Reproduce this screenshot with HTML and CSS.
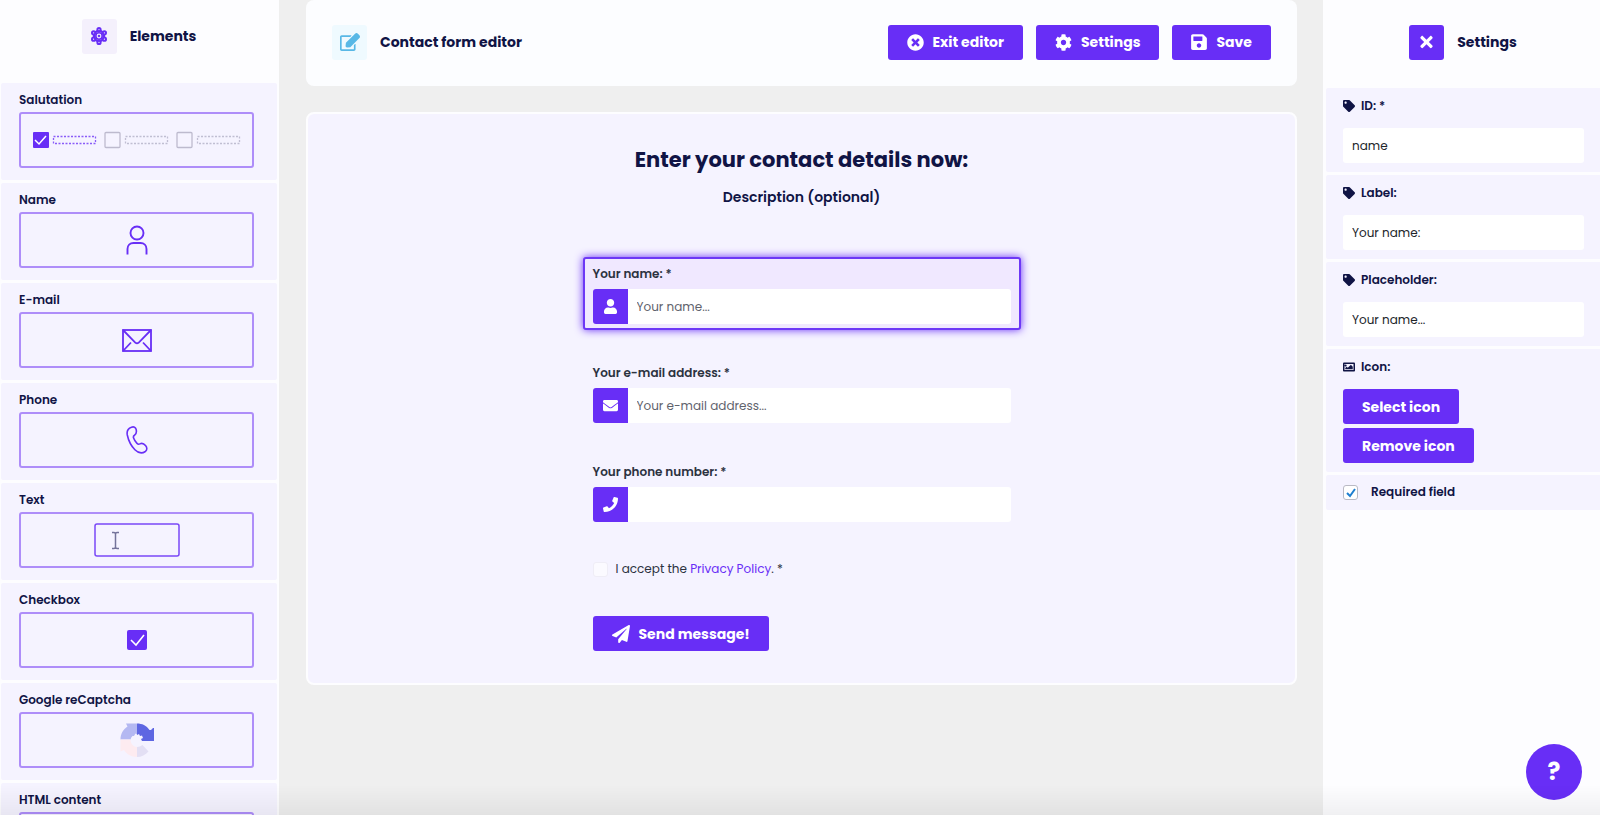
FILE: index.html
```html
<!DOCTYPE html>
<html lang="en">

<head>
    <meta charset="UTF-8">
    <meta name="viewport" content="width=device-width, initial-scale=1.0">
    <title>Contact form editor</title>
    <link rel="stylesheet" href="styles.css">
</head>

<body>
<div class="layout">
    <aside class="sidebar">
        <div class="sidebar-head">
            <span class="head-icon">
                <svg width="18" height="18" viewBox="0 0 18 18" fill="none" stroke="#682ef6" stroke-width="1.6">
                    <path d="M9 3 14 6V12L9 15 4 12V6Z" stroke-width="2.2"/>
                    <circle cx="9" cy="9" r="3.2" fill="#f4f0fc"/>
                    <circle cx="9" cy="9" r="0.5"/>
                    <g fill="#f4f0fc" stroke-width="2">
                        <circle cx="9" cy="2.6" r="1.6"/>
                        <circle cx="14.4" cy="5.8" r="1.6"/>
                        <circle cx="14.4" cy="12.2" r="1.6"/>
                        <circle cx="9" cy="15.4" r="1.6"/>
                        <circle cx="3.6" cy="12.2" r="1.6"/>
                        <circle cx="3.6" cy="5.8" r="1.6"/>
                    </g>
                </svg>
            </span>
            <h2>Elements</h2>
        </div>

        <div class="element">
            <h3>Salutation</h3>
            <div class="element-box">
                <svg width="208" height="18" viewBox="0 0 208 18" fill="none">
                    <rect x="0" y="1" width="16" height="16" rx="1" fill="#682ef6"/>
                    <path d="M2 9l4 4 7-8" stroke="#fff" stroke-width="1.5"/>
                    <rect x="20.5" y="5.5" width="42" height="7" stroke="#8a5cf8" stroke-width="1.3" stroke-dasharray="2 1.5"/>
                    <rect x="72" y="1.5" width="15" height="15" rx="1" stroke="#bdbace" stroke-width="1.3"/>
                    <rect x="92.5" y="5.5" width="42" height="7" stroke="#c0bed2" stroke-width="1.3" stroke-dasharray="2 1.5"/>
                    <rect x="144" y="1.5" width="15" height="15" rx="1" stroke="#bdbace" stroke-width="1.3"/>
                    <rect x="164.5" y="5.5" width="42" height="7" stroke="#c0bed2" stroke-width="1.3" stroke-dasharray="2 1.5"/>
                </svg>
            </div>
        </div>

        <div class="element">
            <h3>Name</h3>
            <div class="element-box">
                <svg width="22" height="30" viewBox="0 0 22 30" fill="none" stroke="#682ef6" stroke-width="1.9">
                    <circle cx="11" cy="8" r="6.5"/>
                    <path d="M1.5 29.5V24c0-3.500 2.500-6 6-6h7c3.500 0 6 2.500 6 6v5.500"/>
                </svg>
            </div>
        </div>

        <div class="element">
            <h3>E-mail</h3>
            <div class="element-box">
                <svg width="30" height="23" viewBox="0 0 30 23" fill="none" stroke="#682ef6" stroke-width="1.8">
                    <rect x="1" y="1" width="28" height="21"/>
                    <path d="M1 1l12.500 12.800q1.500 1 3 0L29 1M1 22l8-8.500M29 22l-8-8.500"/>
                </svg>
            </div>
        </div>

        <div class="element">
            <h3>Phone</h3>
            <div class="element-box">
                <svg width="22" height="28" viewBox="0 0 22 28" fill="none" stroke="#682ef6" stroke-width="1.6">
                    <path d="M5.500 1.200c2.200-.8 4.300 0 4.700 2.400.5 2.500.3 4.400-1.700 5.600-1.300.8-1.400 1.500-.9 2.800.7 2 1.900 3.900 3.400 5.400 1 1 1.700 1.100 2.900.5 2.200-1.100 4-.3 5.600 1.700 1.700 2.100 1.900 4.300-.2 5.900-3.400 2.300-7 1.600-10.400-1.800C5.200 20 2.500 14.600 1.300 9 .6 5.300 2 2.400 5.500 1.200z"/>
                </svg>
            </div>
        </div>

        <div class="element">
            <h3>Text</h3>
            <div class="element-box">
                <svg width="86" height="34" viewBox="0 0 86 34" fill="none">
                    <rect x="1" y="1" width="84" height="32" rx="2" stroke="#7a48f7" stroke-width="1.5"/>
                    <path d="M18 9.500h2q1.500 0 1.500 1.500 0-1.500 1.500-1.500h2M18 25.500h2q1.500 0 1.500-1.500 0 1.500 1.500 1.500h2M21.500 11v13" stroke="#74739a" stroke-width="1.5"/>
                </svg>
            </div>
        </div>

        <div class="element">
            <h3>Checkbox</h3>
            <div class="element-box">
                <svg width="20" height="20" viewBox="0 0 20 20" fill="none">
                    <rect width="20" height="20" rx="2" fill="#682ef6"/>
                    <path d="M4 10l5 5 8-10" stroke="#fff" stroke-width="1.6"/>
                </svg>
            </div>
        </div>

        <div class="element">
            <h3>Google reCaptcha</h3>
            <div class="element-box">
                <svg width="34" height="34" viewBox="0 0 34 34">
                    <path d="M6 .5h11v11l-1.500-1-1.500 2.500h-1.500q-1.500 1-2 3.500H.5C.5 11 3 6.500 7.500 3.500z" fill="#b4b8f2"/>
                    <path d="M17 .5c5 0 9.500 2 12.500 6.500L31 7l2-2h1v13H22l-1-2 2-1-1-2.500-2 .500-1-2-2 1z" fill="#5e66e2"/>
                    <path d="M.5 16.500h10c0 4 2.500 7 6.500 7.500V34C11 34 6.500 31 4 27l-3.500 1.500z" fill="#fdebf0"/>
                    <path d="M17 24q3 0 5.500-2l6 6.500C25.500 32 21.500 34 17 34z" fill="#e3dff4"/>
                </svg>
            </div>
        </div>

        <div class="element">
            <h3>HTML content</h3>
            <div class="element-box"></div>
        </div>
    </aside>

    <main class="main">
        <header class="card topbar">
            <span class="head-icon head-icon-blue">
                <svg width="20" height="18" viewBox="0 0 576 512" fill="#58b8e6">
                    <path d="M402.300 344.900l32-32c5-5 13.700-1.500 13.700 5.700V464c0 26.500-21.500 48-48 48H48c-26.500 0-48-21.500-48-48V112c0-26.500 21.500-48 48-48h273.500c7.100 0 10.700 8.600 5.700 13.700l-32 32c-1.500 1.500-3.500 2.300-5.700 2.300H48v352h352V350.500c0-2.100.8-4.100 2.300-5.600zm156.600-201.800L296.300 405.700l-90.400 10c-26.200 2.900-48.500-19.200-45.600-45.600l10-90.400L432.900 17.100c22.900-22.900 59.900-22.900 82.700 0l43.200 43.200c22.900 22.900 22.900 60 .1 82.800z"/>
                </svg>
            </span>
            <h1>Contact form editor</h1>
            <div class="actions">
                <button class="btn" type="button">
                    <svg width="17" height="17" viewBox="0 0 512 512" fill="currentColor">
                        <path d="M256 8C119 8 8 119 8 256s111 248 248 248 248-111 248-248S393 8 256 8zm121.600 313.100c4.700 4.700 4.700 12.300 0 17L338 377.600c-4.700 4.700-12.300 4.700-17 0L256 312l-65.100 65.600c-4.700 4.700-12.300 4.700-17 0L134.400 338c-4.700-4.700-4.700-12.300 0-17l65.600-65-65.600-65.100c-4.700-4.700-4.700-12.300 0-17l39.600-39.600c4.700-4.700 12.300-4.700 17 0l65 65.700 65.100-65.600c4.700-4.700 12.300-4.700 17 0l39.600 39.600c4.700 4.700 4.700 12.300 0 17L312 256l65.600 65.100z"/>
                    </svg>
                    Exit editor
                </button>
                <button class="btn" type="button">
                    <svg width="17" height="17" viewBox="0 0 512 512" fill="currentColor">
                        <path d="M487.400 315.700l-42.600-24.600c4.300-23.200 4.300-47 0-70.200l42.600-24.600c4.900-2.800 7.100-8.600 5.500-14-11.100-35.600-30-67.800-54.700-94.600-3.800-4.100-10-5.100-14.800-2.300L380.800 110c-17.900-15.400-38.500-27.300-60.800-35.100V25.800c0-5.600-3.900-10.500-9.400-11.700-36.700-8.200-74.300-7.800-109.200 0-5.500 1.200-9.400 6.100-9.400 11.700V75c-22.200 7.900-42.800 19.800-60.800 35.100L88.700 85.500c-4.900-2.800-11-1.900-14.800 2.300-24.700 26.700-43.600 58.900-54.700 94.600-1.700 5.400.6 11.200 5.500 14L67.300 221c-4.300 23.200-4.300 47 0 70.200l-42.600 24.600c-4.900 2.800-7.100 8.600-5.500 14 11.100 35.600 30 67.800 54.700 94.600 3.800 4.100 10 5.100 14.800 2.300l42.600-24.600c17.900 15.400 38.500 27.300 60.800 35.100v49.200c0 5.600 3.900 10.500 9.400 11.700 36.700 8.200 74.300 7.800 109.200 0 5.500-1.200 9.400-6.100 9.400-11.700v-49.200c22.200-7.900 42.800-19.800 60.800-35.100l42.600 24.600c4.900 2.800 11 1.900 14.800-2.300 24.700-26.700 43.600-58.900 54.700-94.600 1.500-5.500-.7-11.300-5.600-14.100zM256 336c-44.100 0-80-35.900-80-80s35.900-80 80-80 80 35.900 80 80-35.900 80-80 80z"/>
                    </svg>
                    Settings
                </button>
                <button class="btn" type="button">
                    <svg width="16" height="18" viewBox="0 0 448 512" fill="currentColor">
                        <path d="M433.900 129.900l-83.900-83.900A48 48 0 0 0 316.100 32H48C21.500 32 0 53.500 0 80v352c0 26.500 21.500 48 48 48h352c26.500 0 48-21.500 48-48V163.900a48 48 0 0 0-14.100-34zM224 416c-35.300 0-64-28.700-64-64 0-35.300 28.700-64 64-64s64 28.700 64 64c0 35.300-28.700 64-64 64zm96-304.500V212c0 6.600-5.400 12-12 12H76c-6.600 0-12-5.400-12-12V108c0-6.600 5.400-12 12-12h228.500c3.200 0 6.200 1.300 8.500 3.500l3.500 3.500c2.300 2.300 3.500 5.300 3.500 8.500z"/>
                    </svg>
                    Save
                </button>
            </div>
        </header>

        <section class="card preview">
            <h2 class="preview-title">Enter your contact details now:</h2>
            <p class="preview-description">Description (optional)</p>

            <form class="form">
                <div class="form-group selected">
                    <label for="name">Your name: *</label>
                    <div class="input-group">
                        <span class="input-icon">
                            <svg width="13" height="15" viewBox="0 0 448 512" fill="currentColor">
                                <path d="M224 256c70.700 0 128-57.300 128-128S294.700 0 224 0 96 57.300 96 128s57.300 128 128 128zm89.600 32h-16.700c-22.200 10.200-46.900 16-72.900 16s-50.600-5.800-72.900-16h-16.700C60.200 288 0 348.200 0 422.400V464c0 26.500 21.500 48 48 48h352c26.500 0 48-21.500 48-48v-41.600c0-74.200-60.200-134.400-134.400-134.400z"/>
                            </svg>
                        </span>
                        <input type="text" id="name" placeholder="Your name...">
                    </div>
                </div>
                <div class="form-group">
                    <label for="email">Your e-mail address: *</label>
                    <div class="input-group">
                        <span class="input-icon">
                            <svg width="15" height="15" viewBox="0 0 512 512" fill="currentColor">
                                <path d="M502.300 190.800c3.900-3.100 9.700-.2 9.700 4.700V400c0 26.500-21.500 48-48 48H48c-26.500 0-48-21.500-48-48V195.600c0-5 5.700-7.800 9.700-4.700 22.400 17.400 52.100 39.500 154.100 113.600 21.100 15.400 56.700 47.800 92.200 47.600 35.700.3 72-32.800 92.300-47.600 102-74.100 131.600-96.300 154-113.700zM256 320c23.200.4 56.600-29.200 73.400-41.400 132.700-96.300 142.800-104.700 173.400-128.700 5.800-4.500 9.200-11.500 9.200-18.900v-19c0-26.500-21.500-48-48-48H48c-26.500 0-48 21.500-48 48v19c0 7.400 3.400 14.300 9.200 18.900 30.600 23.900 40.700 32.400 173.400 128.700 16.800 12.200 50.200 41.800 73.400 41.400z"/>
                            </svg>
                        </span>
                        <input type="email" id="email" placeholder="Your e-mail address...">
                    </div>
                </div>
                <div class="form-group">
                    <label for="phone">Your phone number: *</label>
                    <div class="input-group">
                        <span class="input-icon">
                            <svg width="15" height="15" viewBox="0 0 512 512" fill="currentColor">
                                <path d="M493.400 24.600l-104-24c-11.300-2.600-22.900 3.300-27.500 13.900l-48 112c-4.200 9.800-1.400 21.300 6.900 28l60.600 49.600c-36 76.700-98.900 140.500-177.200 177.200l-49.600-60.600c-6.800-8.300-18.200-11.100-28-6.900l-112 48C3.900 366.500-2 378.100.6 389.400l24 104C27.100 504.200 36.700 512 48 512c256.100 0 464-207.500 464-464 0-11.200-7.700-20.900-18.600-23.400z"/>
                            </svg>
                        </span>
                        <input type="tel" id="phone">
                    </div>
                </div>
                <div class="form-check">
                    <input type="checkbox" id="privacy">
                    <label for="privacy">I accept the <a href="#">Privacy Policy</a>. *</label>
                </div>
                <button class="btn" type="button">
                    <svg width="18" height="18" viewBox="0 0 512 512" fill="currentColor">
                        <path d="M476 3.200L12.500 270.600c-18.100 10.400-15.800 35.600 2.200 43.200L121 358.400l287.300-253.200c5.500-4.900 13.300 2.600 8.600 8.300L176 407v80.500c0 23.600 28.500 32.900 42.500 15.800L282 426l124.600 52.200c14.200 6 30.400-2.900 33-18.200l72-432C515 7.800 493.300-6.800 476 3.200z"/>
                    </svg>
                    Send message!
                </button>
            </form>
        </section>
    </main>

    <aside class="settings">
        <div class="settings-head">
            <button class="btn-close" type="button" aria-label="Close">
                <svg width="13" height="18" viewBox="0 0 352 512" fill="currentColor">
                    <path d="M242.700 256l100.100-100.100c12.300-12.300 12.300-32.200 0-44.500l-22.200-22.200c-12.300-12.300-32.200-12.300-44.500 0L176 189.300 75.900 89.200c-12.300-12.300-32.200-12.300-44.500 0L9.200 111.500c-12.300 12.300-12.300 32.200 0 44.500L109.300 256 9.200 356.100c-12.300 12.300-12.300 32.200 0 44.500l22.200 22.200c12.300 12.300 32.200 12.300 44.500 0L176 322.700l100.100 100.100c12.300 12.300 32.200 12.300 44.500 0l22.200-22.200c12.300-12.300 12.300-32.200 0-44.500L242.700 256z"/>
                </svg>
            </button>
            <h2>Settings</h2>
        </div>

        <div class="setting">
            <label for="field-id">
                <svg width="12" height="12" viewBox="0 0 512 512" fill="currentColor">
                    <path d="M0 252.100V48C0 21.500 21.500 0 48 0h204.100a48 48 0 0 1 33.900 14.100l211.900 211.900c18.700 18.700 18.700 49.100 0 67.900L293.800 497.900c-18.700 18.700-49.100 18.700-67.900 0L14.100 286.100A48 48 0 0 1 0 252.100zM112 64c-26.500 0-48 21.500-48 48s21.500 48 48 48 48-21.500 48-48-21.500-48-48-48z"/>
                </svg>
                ID: *
            </label>
            <input type="text" id="field-id" value="name">
        </div>
        <div class="setting">
            <label for="field-label">
                <svg width="12" height="12" viewBox="0 0 512 512" fill="currentColor">
                    <path d="M0 252.100V48C0 21.500 21.500 0 48 0h204.100a48 48 0 0 1 33.900 14.100l211.900 211.900c18.700 18.700 18.700 49.100 0 67.900L293.800 497.900c-18.700 18.700-49.100 18.700-67.900 0L14.100 286.100A48 48 0 0 1 0 252.100zM112 64c-26.500 0-48 21.500-48 48s21.500 48 48 48 48-21.500 48-48-21.500-48-48-48z"/>
                </svg>
                Label:
            </label>
            <input type="text" id="field-label" value="Your name:">
        </div>
        <div class="setting">
            <label for="field-placeholder">
                <svg width="12" height="12" viewBox="0 0 512 512" fill="currentColor">
                    <path d="M0 252.100V48C0 21.500 21.500 0 48 0h204.100a48 48 0 0 1 33.900 14.100l211.900 211.900c18.700 18.700 18.700 49.100 0 67.900L293.800 497.900c-18.700 18.700-49.100 18.700-67.900 0L14.100 286.100A48 48 0 0 1 0 252.100zM112 64c-26.500 0-48 21.500-48 48s21.500 48 48 48 48-21.500 48-48-21.500-48-48-48z"/>
                </svg>
                Placeholder:
            </label>
            <input type="text" id="field-placeholder" value="Your name...">
        </div>
        <div class="setting">
            <h3>
                <svg width="12" height="12" viewBox="0 0 512 512" fill="currentColor">
                    <path fill-rule="evenodd" d="M48 64h416c26 0 48 22 48 48v288c0 26-22 48-48 48H48c-26 0-48-22-48-48V112c0-26 22-48 48-48zm16 64v256h384V128zM112 144a44 44 0 1 0 1 0zM96 352v-50l60-56 50 46 130-130 80 80v110z"/>
                </svg>
                Icon:
            </h3>
            <div class="setting-buttons">
                <button class="btn" type="button">Select icon</button>
                <button class="btn" type="button">Remove icon</button>
            </div>
        </div>
        <div class="setting setting-check">
            <input type="checkbox" id="required" checked>
            <label for="required">Required field</label>
        </div>
    </aside>
</div>

<button class="help" type="button">?</button>
<div class="bottom-fade"></div>
</body>

</html>
```
FILE: styles.css
```css
* {
    box-sizing: border-box;
}

body {
    margin: 0;
    background-color: #efefef;
    color: #101445;
    font-family: Poppins, Inter, sans-serif;
    font-size: 12px;
    line-height: 20px;
}

h1, h2, h3, p {
    margin: 0;
}

h1, h2 {
    font-size: 14px;
    font-weight: 700;
}

h3, .setting label, .form-group label {
    font-size: 12px;
    font-weight: 600;
}

svg {
    display: block;
    flex-shrink: 0;
}

input {
    font: inherit;
    color: #212529;
}

.layout {
    display: flex;
    height: 100vh;
    overflow: hidden;
}

/* left column */
.sidebar {
    flex: 0 0 279px;
    padding: 0 2px 0 1px;
    background-color: #fdfdff;
    overflow: hidden;
}

.sidebar-head {
    display: flex;
    align-items: center;
    justify-content: center;
    gap: 13px;
    height: 83px;
    padding-bottom: 11px;
}

.head-icon {
    display: flex;
    align-items: center;
    justify-content: center;
    width: 35px;
    height: 35px;
    border-radius: 3px;
    background-color: #f4f0fc;
}

.head-icon-blue {
    background-color: #effaff;
}

.element {
    height: 97px;
    margin-bottom: 3px;
    padding: 7px 23px 12px 18px;
    border-radius: 2px;
    background-color: #f5f3ff;
}

.element-box {
    display: flex;
    align-items: center;
    justify-content: center;
    height: 56px;
    margin-top: 2px;
    border: 2px solid #ae8df9;
    border-radius: 3px;
}

/* middle column */
.main {
    flex: 1;
    min-width: 0;
    padding: 0 26px 0 27px;
}

.card {
    border-radius: 8px;
    background-color: #fcfdff;
}

.topbar {
    display: flex;
    align-items: center;
    gap: 13px;
    height: 86px;
    padding: 0 26px 2px;
}

.actions {
    display: flex;
    gap: 13px;
    margin-left: auto;
}

.btn {
    display: inline-flex;
    align-items: center;
    gap: 9px;
    height: 35px;
    padding: 0 19px;
    border: none;
    border-radius: 3px;
    background-color: #682ef6;
    color: #fff;
    font: inherit;
    font-size: 14px;
    font-weight: 700;
    white-space: nowrap;
    cursor: pointer;
}

.btn:hover {
    background-color: #5a22e6;
}

.preview {
    margin-top: 26px;
    padding: 32px 20px;
    border: 2px solid #fdfdff;
    background-color: #f5f3ff;
    text-align: center;
}

.preview-title {
    font-size: 21px;
    line-height: 28px;
}

.preview-description {
    margin-top: 13px;
    font-size: 14px;
    font-weight: 600;
}

.form {
    max-width: 438px;
    margin: 50px auto 0;
    text-align: left;
}

.form-group {
    margin-bottom: 26px;
    padding: 4px 8px;
    border: 2px solid transparent;
    border-radius: 3px;
}

.form-group.selected {
    border-color: #6d38f6;
    background-color: #f0e8ff;
    box-shadow: 0 0 8px #682ef6;
}

.form-group label {
    display: block;
    margin: 1px 0 5px;
    color: #2c3240;
}

.input-group {
    display: flex;
}

.input-icon {
    display: flex;
    align-items: center;
    justify-content: center;
    width: 35px;
    height: 35px;
    border-radius: 3px 0 0 3px;
    background-color: #682ef6;
    color: #fff;
}

.input-group input {
    flex: 1;
    min-width: 0;
    height: 35px;
    padding: 0 9px;
    border: none;
    border-radius: 0 3px 3px 0;
    background-color: #fff;
}

.input-group input::placeholder {
    color: #5f636d;
    opacity: 1;
}

.form-check {
    display: flex;
    align-items: center;
    gap: 8px;
    padding-left: 10px;
    margin: 31px 0 37px;
    color: #2c3240;
}

.form-check a {
    color: #682ef6;
    text-decoration: none;
}

.form-check input, .setting-check input {
    appearance: none;
    flex-shrink: 0;
    width: 15px;
    height: 15px;
    margin: 0;
    border: 1px solid #efedf6;
    border-radius: 3px;
    background-color: #fbfaff;
}

.form .btn {
    margin-left: 10px;
}

/* right column */
.settings {
    flex: 0 0 277px;
    padding-left: 3px;
    background-color: #fdfdff;
}

.settings-head {
    display: flex;
    align-items: center;
    justify-content: center;
    gap: 13px;
    height: 88px;
    padding-bottom: 4px;
}

.btn-close {
    display: flex;
    align-items: center;
    justify-content: center;
    width: 35px;
    height: 35px;
    padding: 0;
    border: none;
    border-radius: 3px;
    background-color: #682ef6;
    color: #fff;
    cursor: pointer;
}

.setting {
    margin-bottom: 3px;
    padding: 8px 16px 9px 17px;
    border-radius: 2px 0 0 2px;
    background-color: #f5f3ff;
}

.setting label, .setting h3 {
    display: flex;
    align-items: center;
    gap: 6px;
}

.setting input[type="text"] {
    display: block;
    width: 100%;
    height: 35px;
    margin-top: 12px;
    padding: 0 9px;
    border: none;
    border-radius: 3px;
    background-color: #fff;
}

.setting-buttons {
    display: flex;
    flex-direction: column;
    align-items: flex-start;
    gap: 4px;
    margin-top: 12px;
}

.setting-check {
    display: flex;
    align-items: center;
    gap: 13px;
    padding-top: 7px;
    padding-bottom: 8px;
}

.setting-check input {
    border-color: #b9b9c4;
    background: #fff url("data:image/svg+xml,%3Csvg xmlns='http://www.w3.org/2000/svg' viewBox='0 0 13 13'%3E%3Cpath d='M3 7l3 3 5-7' fill='none' stroke='%231e7fd0' stroke-width='2'/%3E%3C/svg%3E");
}

.help {
    position: fixed;
    right: 18px;
    bottom: 15px;
    width: 56px;
    height: 56px;
    border: none;
    border-radius: 50%;
    background-color: #682ef6;
    color: #fff;
    font: inherit;
    font-size: 24px;
    font-weight: 700;
    cursor: pointer;
}

.bottom-fade {
    position: fixed;
    left: 0;
    right: 0;
    bottom: 0;
    height: 30px;
    background: linear-gradient(rgba(0, 0, 0, 0), rgba(0, 0, 0, 0.05));
    pointer-events: none;
}
```
